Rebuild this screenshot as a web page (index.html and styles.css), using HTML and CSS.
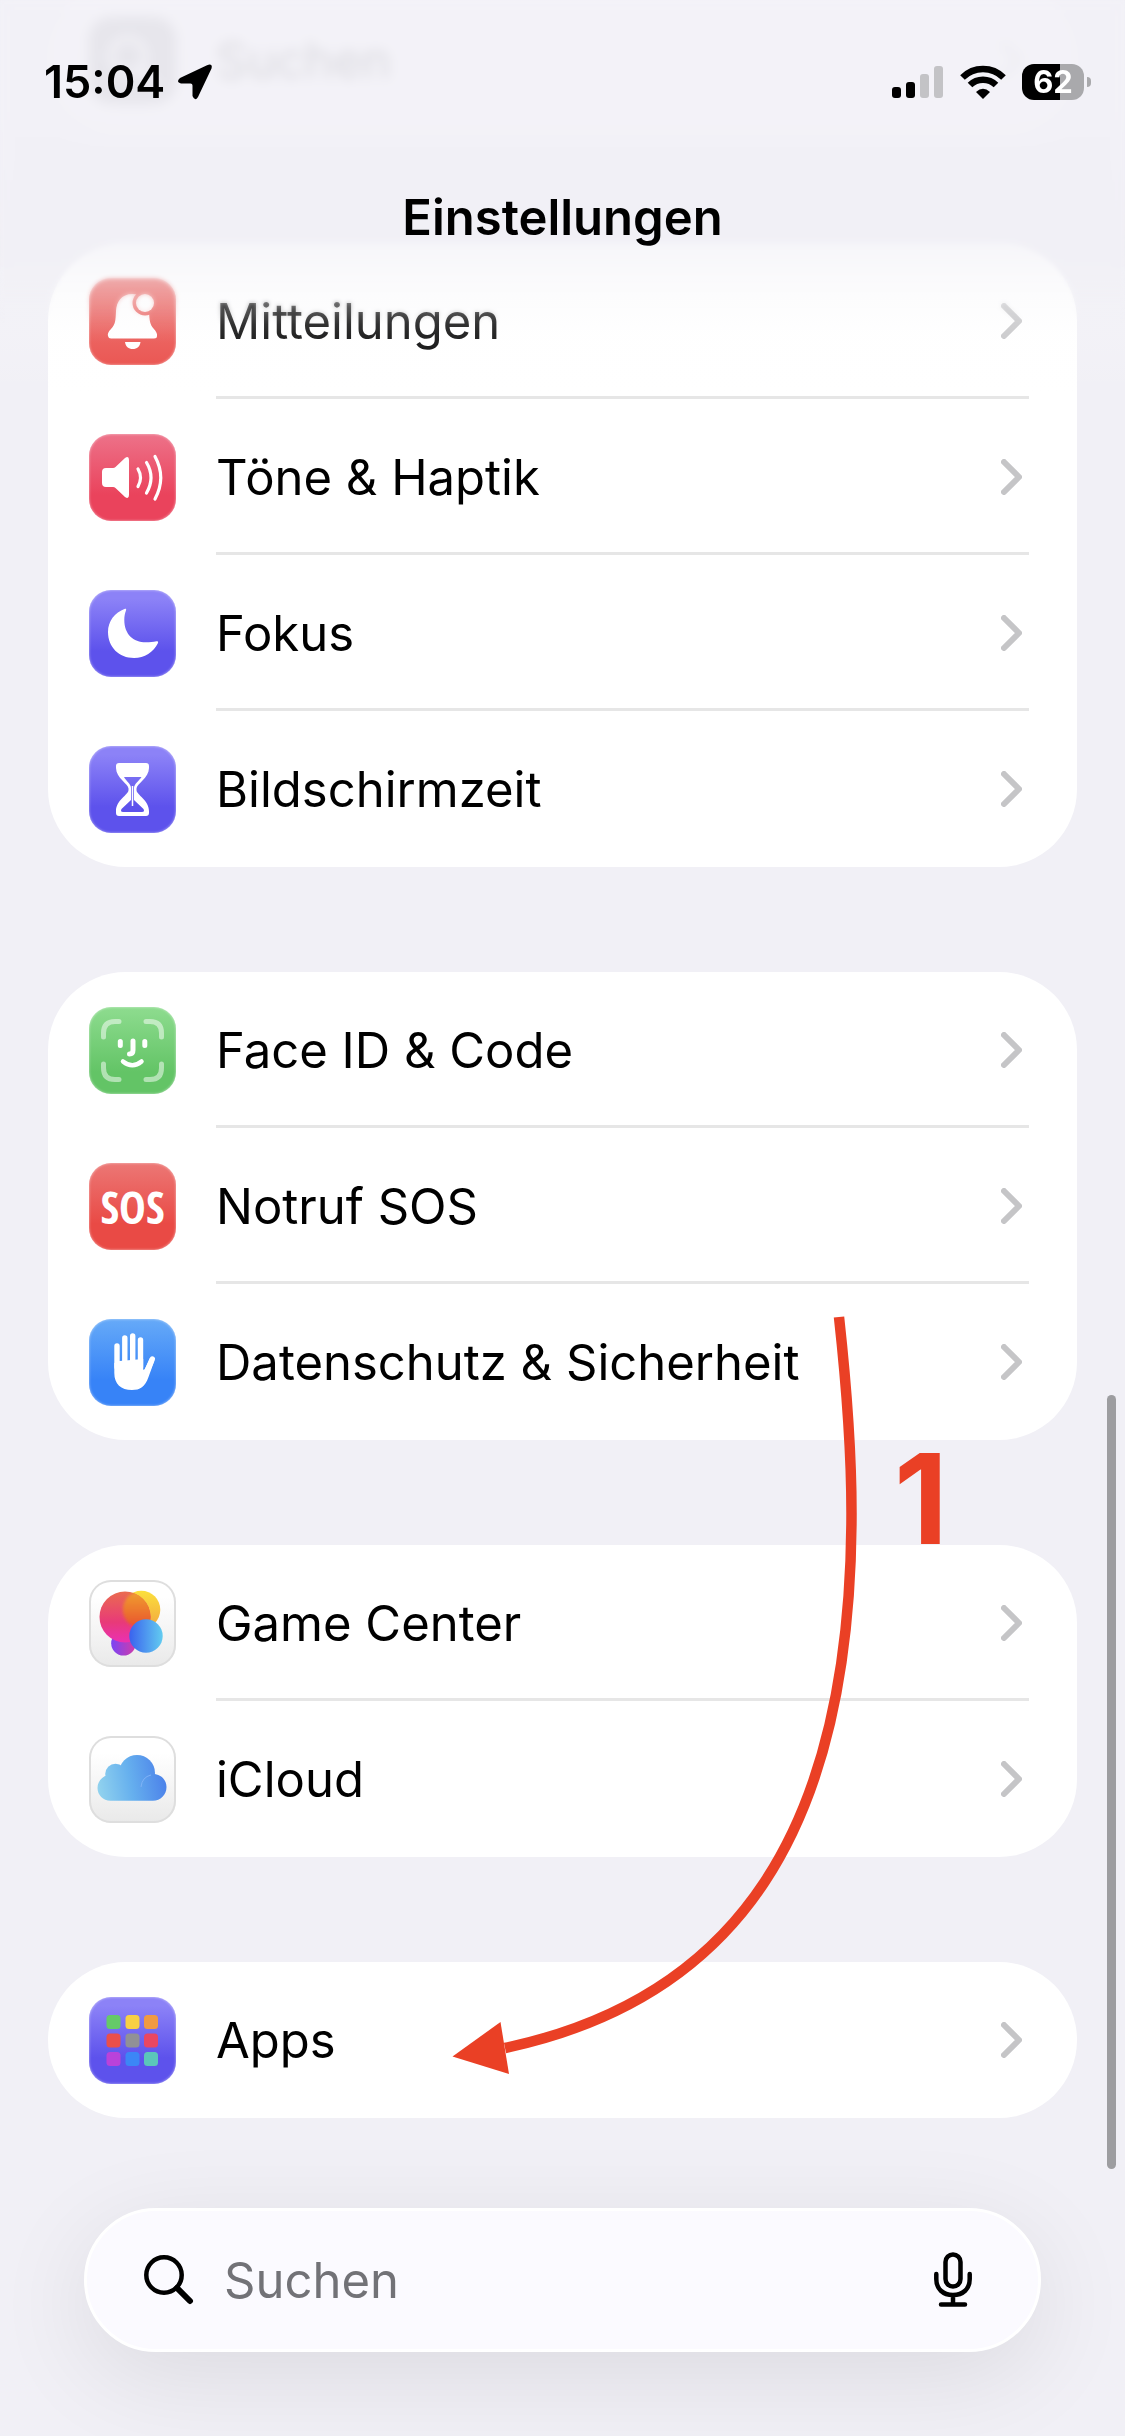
FILE: index.html
```html
<!DOCTYPE html>
<html lang="de">
<head>
    <meta charset="UTF-8">
    <meta name="viewport" content="width=device-width, initial-scale=1.0">
    <title>Einstellungen</title>
    <link rel="stylesheet" href="styles.css">
</head>
<body>
    <!-- shared shapes -->
    <svg class="defs" width="0" height="0" aria-hidden="true">
        <symbol id="chevron" viewBox="0 0 21 36">
            <path d="M3 3L18 18L3 33" fill="none" stroke="#c5c5c7" stroke-width="6" stroke-linecap="round" stroke-linejoin="round"/>
        </symbol>
    </svg>

    <div class="screen">
        <header class="top-bar">
            <div class="status-bar">
                <div class="status-left">
                    <span class="time">15:04</span>
                    <svg width="36" height="36" viewBox="0 0 36 36">
                        <path d="M3 14L30 1.200Q36 -1 34.500 4.500L21 33Q18 38 15.500 32V21.500Q15.500 19.500 13.500 19.500H4Q-1.500 18.500 3 14Z"/>
                    </svg>
                </div>
                <div class="status-right">
                    <svg width="52" height="34" viewBox="0 0 52 34">
                        <rect x="0" y="22" width="9" height="11" rx="3"/>
                        <rect x="14" y="17" width="9" height="16" rx="3"/>
                        <rect x="28" y="9" width="9" height="24" rx="3" fill="#c3c3c6"/>
                        <rect x="42" y="1" width="9" height="32" rx="3" fill="#c3c3c6"/>
                    </svg>
                    <svg width="46" height="34" viewBox="0 0 46 34">
                        <g fill="none" stroke="#000" stroke-width="6.500">
                            <path d="M2.500 12.500A29 29 0 0 1 43.500 12.500"/>
                            <path d="M10 20A18.500 18.500 0 0 1 36 20"/>
                        </g>
                        <path d="M23 34L16 27Q23 20.500 30 27Z"/>
                    </svg>
                    <div class="battery"><span>62</span></div>
                </div>
            </div>
            <h1>Einstellungen</h1>
        </header>

        <main class="content">
            <ul class="card">
                <li><a class="row" href="#">
                    <svg class="icon" viewBox="0 0 87 87">
                        <rect width="87" height="87" rx="21" fill="#7c7c82"/>
                        <circle cx="39" cy="39" r="17" fill="none" stroke="#fff" stroke-width="6"/>
                        <path d="M52 52L67 67" stroke="#fff" stroke-width="7" stroke-linecap="round"/>
                    </svg>
                    <span class="label">Suchen</span>
                    <svg class="chevron"><use href="#chevron"/></svg>
                </a></li>
            </ul>

            <ul class="card">
                <li><a class="row" href="#">
                    <svg class="icon icon-bell" viewBox="0 0 87 87">
                        <mask id="badge-gap">
                            <rect width="87" height="87" fill="#fff"/>
                            <circle cx="56" cy="25" r="12.500" fill="#000"/>
                        </mask>
                        <path mask="url(#badge-gap)" fill="#fff" d="M43.500 16C32 16 27.500 24 27 33C26.500 43 26.500 46 22 51C19 54 18.500 56 19 58Q19.500 60.500 22 60.500H65Q68 60.500 68 58C68.500 56 67 53 64.500 50.500C61 46.500 60.500 43 60 33C59.500 24 55 16 43.500 16Z"/>
                        <circle cx="56" cy="25" r="9" fill="#fff"/>
                        <path fill="#fff" d="M36 64H51.500C51 68.500 48 71 43.700 71C39.500 71 36.500 68.500 36 64Z"/>
                    </svg>
                    <span class="label">Mitteilungen</span>
                    <svg class="chevron"><use href="#chevron"/></svg>
                </a></li>
                <li><a class="row" href="#">
                    <svg class="icon icon-sound" viewBox="0 0 87 87">
                        <path fill="#fff" d="M17 34H24Q25.500 34 26.500 33L36 24Q40 21.500 40 26V61Q40 65.500 36 63L26.500 54Q25.500 53 24 53H17Q13 53 13 49V38Q13 34 17 34Z"/>
                        <g fill="none" stroke="#fff" stroke-width="3.200" stroke-linecap="round">
                            <path d="M49 35Q54 43.500 49 52.500"/>
                            <path d="M57.500 28.500Q66.500 43.500 57.500 59"/>
                            <path d="M66 22.500Q77.500 43.500 66 65"/>
                        </g>
                    </svg>
                    <span class="label">Töne &amp; Haptik</span>
                    <svg class="chevron"><use href="#chevron"/></svg>
                </a></li>
                <li><a class="row" href="#">
                    <svg class="icon icon-purple" viewBox="0 0 87 87">
                        <path fill="#fff" d="M36 18.800C25.500 22.500 19 31.500 19 42C19 57 30 68 45 68C55.500 68 64.500 62 69 53C69.500 51.500 68.500 51 67.500 51.300C64 52.200 61 52.300 57 52.300C44 52.300 35.300 44 35.300 30C35.300 26 36 23 37 20.500C37.500 19 37 18.600 36 18.800Z"/>
                    </svg>
                    <span class="label">Fokus</span>
                    <svg class="chevron"><use href="#chevron"/></svg>
                </a></li>
                <li><a class="row" href="#">
                    <svg class="icon icon-purple" viewBox="0 0 87 87">
                        <path fill="#fff" fill-rule="evenodd" d="M30 17H57Q60 17 60 20V22C60 32 47.500 38 47.500 42.500V44C47.500 49 60 54 60 65V67Q60 70 57 70H30Q27 70 27 67V65C27 54 39.500 49 39.500 44V42.500C39.500 38 27 32 27 22V20Q27 17 30 17ZM35 31C37 35 42 38 42 42V54L32.500 63Q31 66 34 66H53Q56 66 54.500 63L45 54V42C45 38 50 35 52.500 31Z"/>
                        <path d="M43.500 40V60" stroke="#fff" stroke-width="1.500"/>
                    </svg>
                    <span class="label">Bildschirmzeit</span>
                    <svg class="chevron"><use href="#chevron"/></svg>
                </a></li>
            </ul>

            <ul class="card">
                <li><a class="row" href="#">
                    <svg class="icon icon-green" viewBox="0 0 87 87">
                        <g fill="none" stroke="#fff" stroke-width="5" stroke-linecap="round">
                            <path opacity=".5" d="M30 14.500H26Q14.500 14.500 14.500 26V30M57 14.500H61Q72.500 14.500 72.500 26V30M30 72.500H26Q14.500 72.500 14.500 61V57M57 72.500H61Q72.500 72.500 72.500 61V57"/>
                            <path d="M31.300 34.500V38.500M55.800 34.500V38.500M44 34V43Q44 47 40.500 47"/>
                            <path d="M34 54.500Q43.500 62 52.500 54.500" stroke-width="4.500"/>
                        </g>
                    </svg>
                    <span class="label">Face ID &amp; Code</span>
                    <svg class="chevron"><use href="#chevron"/></svg>
                </a></li>
                <li><a class="row" href="#">
                    <span class="icon icon-sos">SOS</span>
                    <span class="label">Notruf SOS</span>
                    <svg class="chevron"><use href="#chevron"/></svg>
                </a></li>
                <li><a class="row" href="#">
                    <svg class="icon icon-blue" viewBox="0 0 87 87">
                        <g stroke="#fff" stroke-width="5.400" stroke-linecap="round">
                            <path d="M28 27V48M35.800 19V48M43.700 17V48M51.500 21V48"/>
                            <path d="M63.300 40L55 59"/>
                        </g>
                        <path fill="#fff" d="M25.300 44L30.500 42L54.200 40V50.500Q55 51.500 56 49.500L61 39L65.500 41.500L59.500 58C56 68 51 71 43 71C32 71 25.300 65 25.300 54Z"/>
                    </svg>
                    <span class="label">Datenschutz &amp; Sicherheit</span>
                    <svg class="chevron"><use href="#chevron"/></svg>
                </a></li>
            </ul>

            <ul class="card">
                <li><a class="row" href="#">
                    <svg class="icon icon-white" viewBox="0 0 87 87">
                        <defs>
                            <linearGradient id="gc-red" x1="0" y1="0" x2="0" y2="1">
                                <stop offset="0" stop-color="#ea6b50"/>
                                <stop offset=".6" stop-color="#e83a78"/>
                                <stop offset="1" stop-color="#ea30b4"/>
                            </linearGradient>
                            <linearGradient id="gc-yellow" x1="0" y1="0" x2="0" y2="1">
                                <stop offset="0" stop-color="#fbe03c"/>
                                <stop offset="1" stop-color="#f2a640"/>
                            </linearGradient>
                            <linearGradient id="gc-mix" x1="0" y1="0" x2="0" y2="1">
                                <stop offset="0" stop-color="#f0a030"/>
                                <stop offset="1" stop-color="#e8502c"/>
                            </linearGradient>
                            <linearGradient id="gc-blue" x1="0" y1="0" x2="1" y2="0">
                                <stop offset="0" stop-color="#3a62ee"/>
                                <stop offset="1" stop-color="#62ccf0"/>
                            </linearGradient>
                            <linearGradient id="gc-purple" x1="0" y1="0" x2="1" y2="0">
                                <stop offset="0" stop-color="#7a44f4"/>
                                <stop offset="1" stop-color="#d23ca8"/>
                            </linearGradient>
                            <clipPath id="gc-clip"><circle cx="36" cy="37" r="25.500"/></clipPath>
                            <filter id="gc-soft"><feGaussianBlur stdDeviation="1.500"/></filter>
                        </defs>
                        <circle cx="34.500" cy="63.300" r="12.300" fill="url(#gc-purple)"/>
                        <circle cx="52.300" cy="29.700" r="19" fill="url(#gc-yellow)"/>
                        <circle cx="36" cy="37" r="25.500" fill="url(#gc-red)"/>
                        <g clip-path="url(#gc-clip)">
                            <circle cx="52.300" cy="29.700" r="18.500" fill="url(#gc-mix)" filter="url(#gc-soft)"/>
                        </g>
                        <circle cx="57" cy="56" r="16.700" fill="url(#gc-blue)"/>
                    </svg>
                    <span class="label">Game Center</span>
                    <svg class="chevron"><use href="#chevron"/></svg>
                </a></li>
                <li><a class="row" href="#">
                    <svg class="icon icon-white" viewBox="0 0 87 87">
                        <defs>
                            <linearGradient id="cloud" gradientUnits="userSpaceOnUse" x1="10" y1="62" x2="76" y2="50">
                                <stop offset="0" stop-color="#92d3ee"/>
                                <stop offset=".5" stop-color="#66b0ee"/>
                                <stop offset="1" stop-color="#4d84ea"/>
                            </linearGradient>
                        </defs>
                        <g fill="url(#cloud)">
                            <path d="M21.500 39C23 43 48 36 64 38C72 38 77.500 44 77.500 51C77.500 59 71.500 64.700 64 64.700H21.500C14 64.700 8.500 59 8.500 52C8.500 45 14 39 21.500 39Z"/>
                            <circle cx="26.500" cy="38" r="10.300"/>
                            <circle cx="48" cy="37" r="18"/>
                        </g>
                        <path d="M52 51Q53 41 62 39" fill="none" stroke="#7fb2f5" stroke-width="1"/>
                    </svg>
                    <span class="label">iCloud</span>
                    <svg class="chevron"><use href="#chevron"/></svg>
                </a></li>
            </ul>

            <ul class="card">
                <li><a class="row" href="#">
                    <svg class="icon icon-purple" viewBox="0 0 87 87">
                        <rect x="17.500" y="18" width="14" height="14" rx="3.500" fill="#65ca68"/>
                        <rect x="36.500" y="18" width="14" height="14" rx="3.500" fill="#f8d044"/>
                        <rect x="55" y="18" width="14" height="14" rx="3.500" fill="#f09a42"/>
                        <rect x="17.500" y="36.500" width="14" height="14" rx="3.500" fill="#ea4f4b"/>
                        <rect x="36.500" y="36.500" width="14" height="14" rx="3.500" fill="#919196"/>
                        <rect x="55" y="36.500" width="14" height="14" rx="3.500" fill="#ea4762"/>
                        <rect x="17.500" y="55" width="14" height="14" rx="3.500" fill="#b942da"/>
                        <rect x="36.500" y="55" width="14" height="14" rx="3.500" fill="#3c86f6"/>
                        <rect x="55" y="55" width="14" height="14" rx="3.500" fill="#5bc6ba"/>
                    </svg>
                    <span class="label">Apps</span>
                    <svg class="chevron"><use href="#chevron"/></svg>
                </a></li>
            </ul>
        </main>

        <form class="search" role="search">
            <label for="search" aria-label="Suchen">
                <svg width="50" height="50" viewBox="0 0 50 50" fill="none" stroke="#000" stroke-linecap="round">
                    <circle cx="20" cy="20" r="17.700" stroke-width="4.500"/>
                    <path d="M33 33L46 46" stroke-width="6"/>
                </svg>
            </label>
            <input type="text" id="search" placeholder="Suchen">
            <button type="button" aria-label="Diktieren">
                <svg width="38" height="56" viewBox="0 0 38 56" fill="none" stroke="#000" stroke-width="4.500" stroke-linecap="round">
                    <rect x="11.500" y="2.500" width="15" height="32" rx="7.500"/>
                    <path d="M2.300 22V27C2.300 37 9 43 19 43C29 43 35.700 37 35.700 27V22M19 43V52M7 52.500H31"/>
                </svg>
            </button>
        </form>

        <div class="scrollbar"></div>

        <!-- step marker drawn over the list -->
        <svg class="arrow" width="410" height="770" viewBox="0 0 410 770">
            <path d="M389 12C396 76 401.500 143 401.500 208C401.500 528 285 694 55 743" fill="none" stroke="#ea4025" stroke-width="10.500"/>
            <path d="M2.500 751.500L50.500 717L59 769Z" fill="#ea4025"/>
        </svg>
        <span class="step">1</span>
    </div>
</body>
</html>
```

FILE: styles.css
```css
* {
    box-sizing: border-box;
}
body {
    margin: 0;
    background-color: #f1f0f6;
    color: #000;
    font-family: Inter, Roboto, "Liberation Sans", sans-serif;
    font-size: 49px;
    line-height: 60px;
}
.defs {
    position: absolute;
}
.screen {
    position: relative;
    overflow: hidden;
    padding-bottom: 84px;
}

/* translucent bar over the scrolled list */
.top-bar {
    position: absolute;
    top: 0;
    left: 0;
    right: 0;
    z-index: 1;
    height: 400px;
    background: linear-gradient(rgba(242, 241, 247, 0.9) 110px, rgba(241, 240, 246, 0.9) 200px, rgba(241, 240, 246, 0.6) 245px, rgba(245, 245, 248, 0.35) 290px, rgba(252, 252, 253, 0.15) 335px, rgba(255, 255, 255, 0) 395px);
}
.top-bar::before,
.top-bar::after {
    content: "";
    position: absolute;
    inset: 0;
    z-index: -1;
    backdrop-filter: blur(6px);
    mask-image: linear-gradient(#000 200px, transparent 270px);
}
.top-bar::after {
    backdrop-filter: blur(2px);
    mask-image: linear-gradient(#000 270px, transparent 325px);
}
.status-bar {
    display: flex;
    justify-content: space-between;
    align-items: center;
    height: 164px;
    padding: 0 34px 0 44px;
}
.status-left,
.status-right {
    display: flex;
    align-items: center;
}
.status-left {
    gap: 12px;
}
.status-right {
    gap: 16px;
}
.time {
    font-size: 45px;
    font-weight: 600;
}
.battery {
    position: relative;
    width: 62px;
    height: 36px;
    margin-right: 7px;
    border-radius: 12px;
    background: linear-gradient(90deg, #000 62%, #a9a9ac 62%);
    color: #fff;
    font-size: 31px;
    font-weight: 700;
    line-height: 36px;
    text-align: center;
}
.battery::after {
    content: "";
    position: absolute;
    top: 13px;
    right: -7px;
    width: 4px;
    height: 10px;
    border-radius: 0 4px 4px 0;
    background-color: #a9a9ac;
}
h1 {
    margin: 0;
    padding-top: 24px;
    font-size: 49px;
    font-weight: 600;
    line-height: 60px;
    text-align: center;
}

.content {
    display: flex;
    flex-direction: column;
    gap: 105px;
    margin-top: -18px;
    padding: 0 48px;
}
.card {
    margin: 0;
    padding: 0;
    border-radius: 78px;
    background-color: #fff;
    list-style: none;
}
.row {
    display: grid;
    grid-template-columns: 87px 1fr 21px;
    column-gap: 40px;
    align-items: center;
    position: relative;
    height: 156px;
    padding: 0 55px 0 41px;
    color: #000;
    text-decoration: none;
}
.label {
    padding-top: 2px;
}
li:not(:last-child) .row::after {
    content: "";
    position: absolute;
    left: 168px;
    right: 48px;
    bottom: 0;
    height: 3px;
    background-color: #e6e6e6;
}
.icon {
    display: block;
    width: 87px;
    height: 87px;
    border-radius: 22px;
    box-shadow: inset 0 0 2px 1px rgba(255, 255, 255, 0.3);
}
.icon-bell {
    background: linear-gradient(#eb7674, #e94a46 75%);
}
.icon-sound {
    background: linear-gradient(#ed7289, #ea435c 70%);
}
.icon-purple {
    background: linear-gradient(#8c82f7 10%, #5d52ec 70%);
}
.icon-green {
    background: linear-gradient(#8edc8f, #63c466 75%);
}
.icon-sos {
    background: linear-gradient(#ec7775, #e94a45 70%);
    color: #fff;
    font-family: "Liberation Sans Narrow", "Open Sans Condensed", "Roboto Condensed", Roboto, sans-serif;
    font-size: 45px;
    font-weight: 700;
    line-height: 87px;
    text-align: center;
}
.icon-blue {
    background: linear-gradient(#66aaf8, #3783f7 70%);
}
.icon-white {
    background: linear-gradient(#fff 20%, #e9e9e9);
    box-shadow: inset 0 0 0 2px #dedede;
}
.chevron {
    display: block;
    width: 21px;
    height: 36px;
}

.search {
    display: flex;
    align-items: center;
    height: 144px;
    margin: 90px 84px 0;
    padding: 0 66px 0 57px;
    border: 3px solid #fff;
    border-radius: 72px;
    background-color: #fbfaff;
    box-shadow: 0 24px 100px rgba(0, 0, 0, 0.09);
}
.search svg {
    display: block;
}
.search input {
    flex: 1;
    min-width: 0;
    padding: 2px 30px 0;
    border: none;
    outline: none;
    background: none;
    font: inherit;
}
.search input::placeholder {
    color: #727277;
    opacity: 1;
}
.search button {
    padding: 0;
    border: none;
    background: none;
    cursor: pointer;
}

.scrollbar {
    position: absolute;
    top: 1395px;
    right: 9px;
    width: 9px;
    height: 774px;
    border-radius: 5px;
    background-color: #9d9da0;
}
.arrow {
    position: absolute;
    top: 1305px;
    left: 450px;
    z-index: 2;
}
.step {
    position: absolute;
    top: 1435px;
    left: 894px;
    z-index: 2;
    color: #ea4025;
    font-size: 125px;
    font-weight: 700;
    line-height: 128px;
}
```
